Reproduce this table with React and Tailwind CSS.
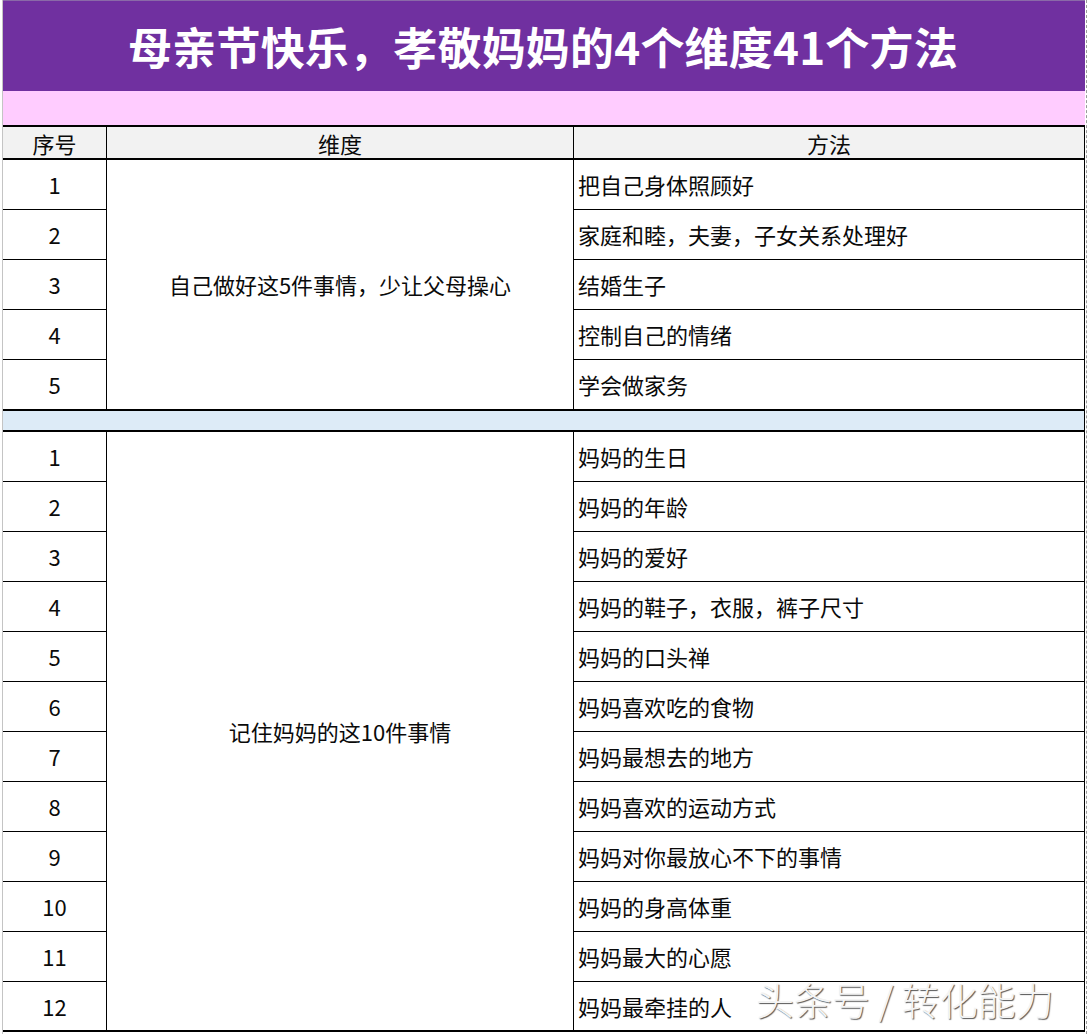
import React from "react";

const block1 = ["把自己身体照顾好", "家庭和睦，夫妻，子女关系处理好", "结婚生子", "控制自己的情绪", "学会做家务"];
const block2 = [
  "妈妈的生日",
  "妈妈的年龄",
  "妈妈的爱好",
  "妈妈的鞋子，衣服，裤子尺寸",
  "妈妈的口头禅",
  "妈妈喜欢吃的食物",
  "妈妈最想去的地方",
  "妈妈喜欢的运动方式",
  "妈妈对你最放心不下的事情",
  "妈妈的身高体重",
  "妈妈最大的心愿",
  "妈妈最牵挂的人",
];

function Block({ items, label, rowsClass, spanClass }) {
  const n = items.length;
  return (
    <div className={`grid grid-cols-[104px_467px_1fr] ${rowsClass} border-b-2 border-black`}>
      {items.map((t, i) => {
        const last = i === n - 1;
        const b = last ? "" : "border-b border-black";
        return (
          <React.Fragment key={i}>
            <div
              className={`flex items-center justify-center border-r border-black ${b}`}
              style={{ gridColumn: 1, gridRow: i + 1 }}
            >
              {i + 1}
            </div>
            <div
              className={`flex items-center pl-[4px] border-r border-black ${b}`}
              style={{ gridColumn: 3, gridRow: i + 1 }}
            >
              {t}
            </div>
          </React.Fragment>
        );
      })}
      <div
        className={`flex items-center justify-center border-r border-black ${spanClass}`}
        style={{ gridColumn: 2 }}
      >
        {label}
      </div>
    </div>
  );
}

export default function App() {
  return (
    <div
      className="relative w-[1089px] h-[1034px] bg-white overflow-hidden text-[22px] text-[#0a0a0a]"
      style={{ fontFamily: '"Noto Sans CJK SC", "Noto Sans", sans-serif' }}
    >
      <div className="flex ml-[2px]">
        <div className="w-[1083px] border-l border-[#c4c4c4]">
          <div className="h-[91px] bg-[#7030A0] border-t border-[#8a6aa8] flex items-center justify-center pr-[2px]">
            <span className="text-white font-bold text-[44px] leading-none tracking-[0.2px]">
              母亲节快乐，孝敬妈妈的4个维度41个方法
            </span>
          </div>
          <div className="h-[34px] bg-[#FFCCFF]"></div>
          <div className="border-t-2 border-black">
            <div className="grid grid-cols-[104px_467px_1fr] h-[33px] bg-[#F2F2F2] border-b-2 border-black">
              <div className="flex items-center justify-center border-r border-black">序号</div>
              <div className="flex items-center justify-center border-r border-black">维度</div>
              <div className="flex items-center justify-center border-r border-black">方法</div>
            </div>
            <Block
              items={block1}
              label="自己做好这5件事情，少让父母操心"
              rowsClass="grid-rows-[50px_50px_50px_50px_49px]"
              spanClass="row-start-1 row-span-5"
            />
            <div className="h-[21px] bg-[#DDEBF7] border-b-2 border-black border-r border-r-black"></div>
            <Block
              items={block2}
              label="记住妈妈的这10件事情"
              rowsClass="grid-rows-[50px_50px_50px_50px_50px_50px_50px_50px_50px_50px_50px_48px]"
              spanClass="row-start-1 row-span-12"
            />
          </div>
        </div>
        <div className="ml-[1px] w-0 h-[1034px] border-l border-dashed border-[#9a9a9a]"></div>
      </div>
      <div className="absolute left-[756px] top-[980px] text-[38px] font-light leading-none text-[#f4f4f4] [text-shadow:1px_1px_1px_#555] whitespace-nowrap">
        头条号 / 转化能力
      </div>
    </div>
  );
}
